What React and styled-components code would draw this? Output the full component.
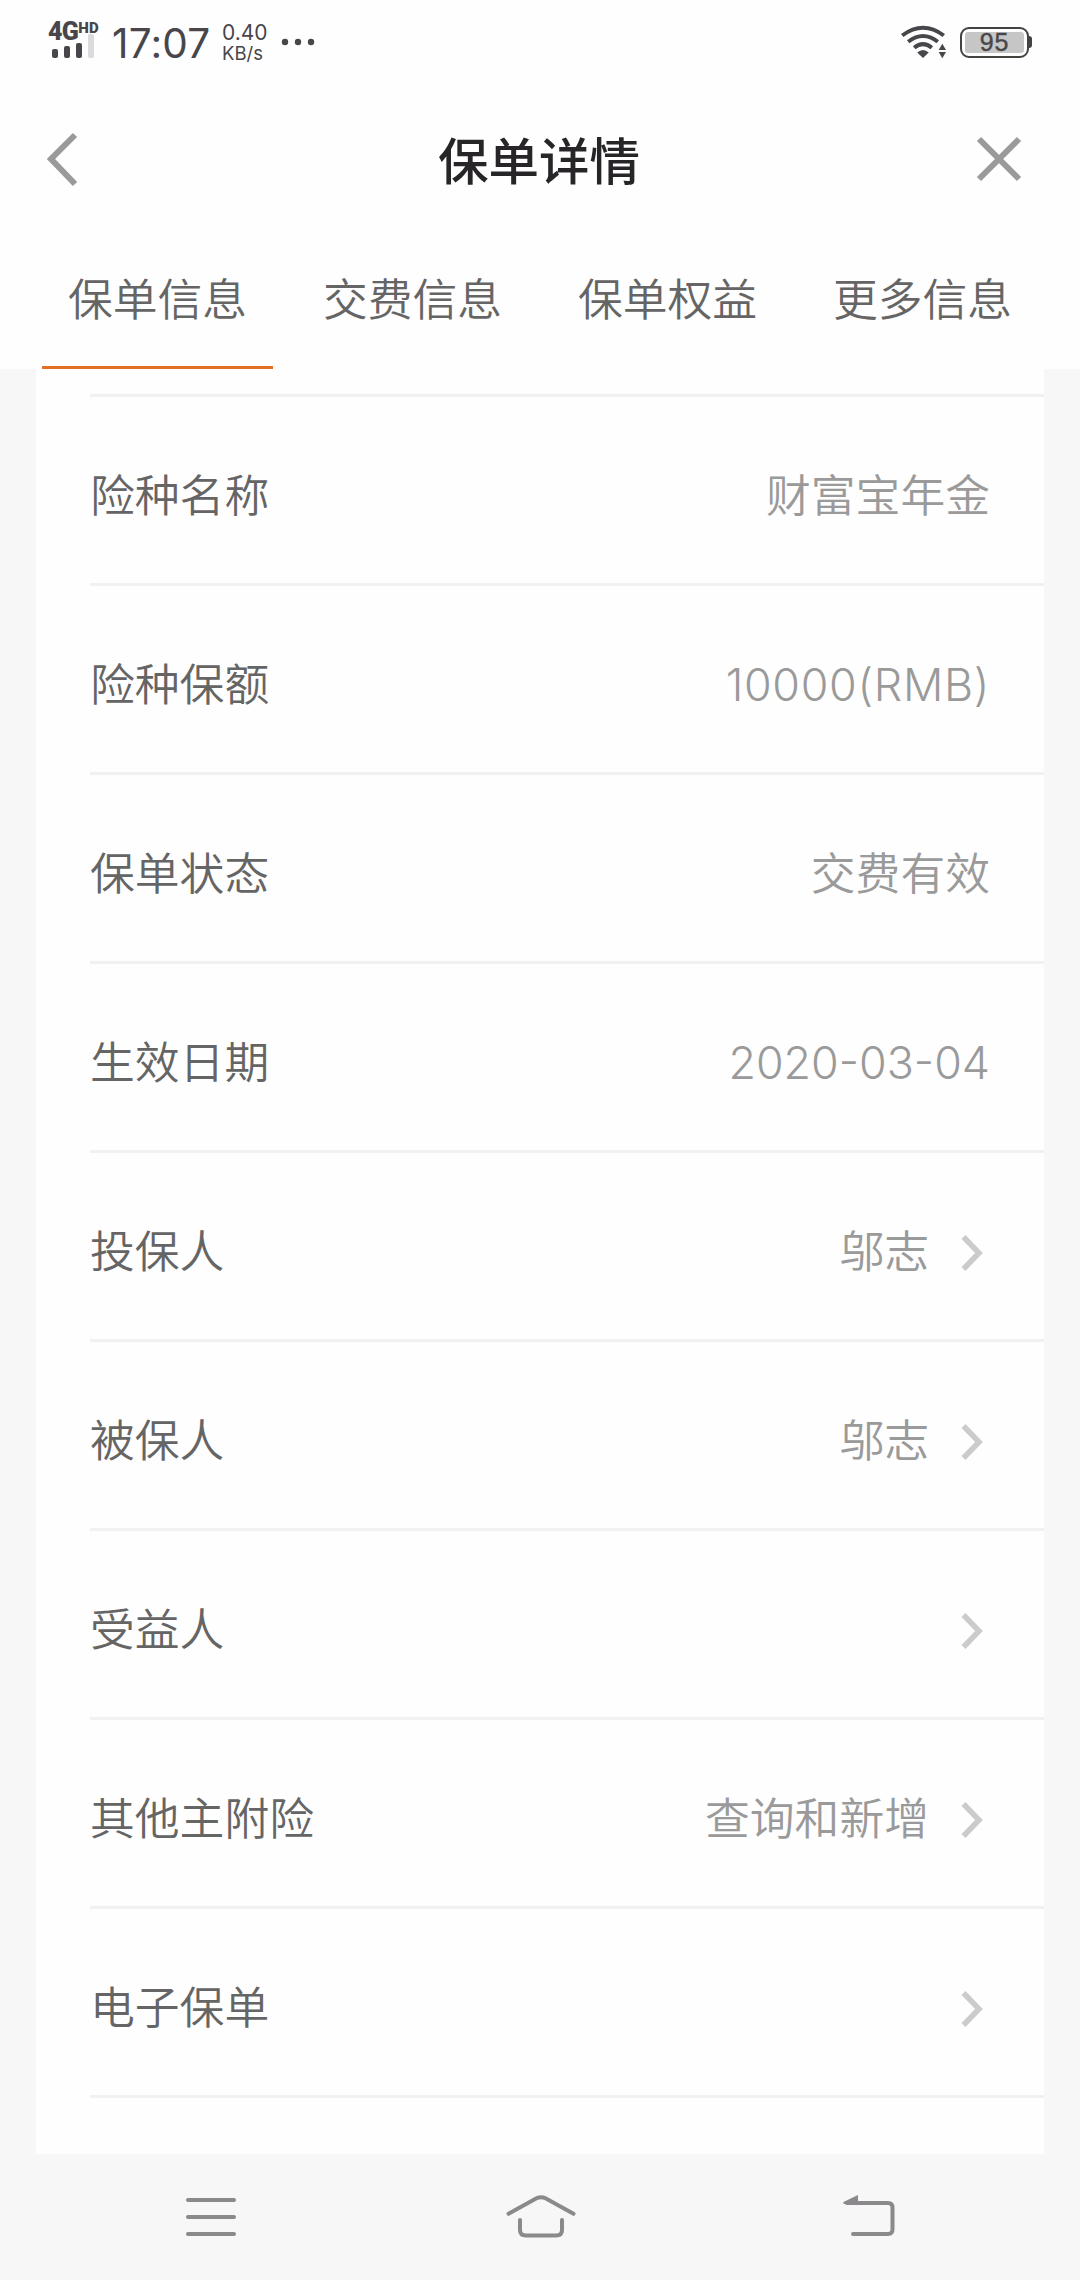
import React from 'react';
import styled, { createGlobalStyle } from 'styled-components';

const cjk = '"Noto Sans CJK SC", sans-serif';

const GlobalStyle = createGlobalStyle`
  * { box-sizing: border-box; }
  body { margin: 0; background: #f7f7f7; font-family: Inter, ${cjk}; }
`;

const Screen = styled.div`
  width: 1080px;
  height: 2280px;
  display: flex;
  flex-direction: column;
  background: #f7f7f7;
  overflow: hidden;
`;

const StatusBar = styled.div`
  height: 84px;
  padding: 0 48px;
  display: flex;
  justify-content: space-between;
  background: #fefefe;
  color: #48464a;
`;

const StatusGroup = styled.div`
  display: flex;
  align-items: flex-start;
`;

const Signal = styled.div`
  width: 52px;
  padding-top: 20px;
  display: flex;
  flex-direction: column;
`;

const Network = styled.div`
  display: flex;
  align-items: flex-start;
  font-family: Roboto, sans-serif;
  font-weight: 900;
  line-height: 24px;
  font-size: 25px;
  letter-spacing: -0.7px;
  white-space: nowrap;
`;

const NetworkMark = styled.span`
  font-size: 15px;
  line-height: 16px;
  letter-spacing: 0.2px;
`;

const SignalBars = styled.svg`
  margin: -10px 0 0 4px;
`;

const Clock = styled.div`
  width: 98px;
  margin-left: 12px;
  padding-top: 20px;
  font-size: 40.5px;
  line-height: 48px;
  letter-spacing: 0.2px;
  white-space: nowrap;
`;

const Speed = styled.div`
  width: 50px;
  margin-left: 12px;
  padding-top: 23px;
  display: flex;
  flex-direction: column;
  white-space: nowrap;
`;

const SpeedLine = styled.span`
  font-size: ${(p) => p.$size}px;
  line-height: 20px;
`;

const Dots = styled.svg`
  margin: 38px 0 0 9px;
`;

const Wifi = styled.svg`
  margin: 24px 12px 0 0;
`;

const Battery = styled.div`
  width: 69px;
  height: 31px;
  margin-top: 27px;
  padding: 3px;
  border: 2px solid #42443f;
  border-radius: 9px;
  display: flex;
`;

const BatteryLevel = styled.div`
  flex: 1;
  border-radius: 3px;
  background: #c6c6c6;
  font: 400 25px/21px "Liberation Sans", sans-serif;
  -webkit-text-stroke: 0.4px #48464a;
  letter-spacing: 0.8px;
  text-align: center;
`;

const BatteryCap = styled.div`
  width: 3px;
  height: 12px;
  margin-top: 36px;
  border-radius: 0 3px 3px 0;
  background: #42443f;
`;

const TitleBar = styled.header`
  height: 152px;
  padding: 0 56px 0 45px;
  display: flex;
  align-items: flex-start;
  justify-content: space-between;
  background: #fefefe;
`;

const Title = styled.h1`
  margin: 36px 0 0 23px;
  font: 500 50.5px/76px ${cjk};
  color: #272528;
`;

const HeaderIcon = styled.svg`
  margin-top: ${(p) => p.$top}px;
`;

const Tabs = styled.nav`
  height: 133px;
  padding: 0 42px;
  display: flex;
  justify-content: space-between;
  background: #fefefe;
`;

const Tab = styled.div`
  width: 231px;
  padding-top: 27px;
  text-align: center;
  font: 350 44.8px/68px ${cjk};
  color: #656565;
  border-bottom: 3px solid ${(p) => (p.$active ? '#e37024' : 'transparent')};
`;

const Panel = styled.main`
  height: 1785px;
  margin: 0 36px;
  padding-left: 54px;
  background: #fefefe;
`;

const ListTop = styled.div`
  height: 28px;
  border-bottom: 3px solid #eff2f0;
`;

const Row = styled.div`
  height: 189px;
  padding: 5px 54px 0 0;
  display: flex;
  align-items: center;
  border-bottom: 3px solid #eff2f0;
`;

const Label = styled.span`
  flex: 1;
  font: 350 44.8px/68px ${cjk};
  color: #656565;
`;

const Value = styled.span`
  padding-top: ${(p) => (p.$latin ? 6 : 0)}px;
  font: 350 44.8px/68px ${(p) => (p.$latin ? `Inter, ${cjk}` : cjk)};
  font-weight: ${(p) => (p.$latin ? 300 : 350)};
  font-feature-settings: "case" ${(p) => (p.$raised ? 1 : 0)};
  letter-spacing: ${(p) => p.$tracking || 0}px;
  color: #9a9a9a;
`;

const Arrow = styled.svg`
  margin: 8px 6px 0 31px;
`;

const NavBar = styled.footer`
  flex: 1;
  padding: 41px 185px 0 186px;
  display: flex;
  justify-content: space-between;
  align-items: flex-start;
`;

const HomeIcon = styled.svg`
  margin-left: 2px;
`;

const tabs = ['保单信息', '交费信息', '保单权益', '更多信息'];

const rows = [
  { label: '险种名称', value: '财富宝年金' },
  { label: '险种保额', value: '10000(RMB)', latin: true, tracking: 0.7 },
  { label: '保单状态', value: '交费有效' },
  { label: '生效日期', value: '2020-03-04', latin: true, raised: true },
  { label: '投保人', value: '邬志', link: true },
  { label: '被保人', value: '邬志', link: true },
  { label: '受益人', value: '', link: true },
  { label: '其他主附险', value: '查询和新增', link: true },
  { label: '电子保单', value: '', link: true },
];

export default function App() {
  return (
    <Screen>
      <GlobalStyle />
      <StatusBar>
        <StatusGroup>
          <Signal>
            <Network>4G<NetworkMark>HD</NetworkMark></Network>
            <SignalBars width="44" height="25" viewBox="0 0 44 25" fill="#48464a">
              <rect x="0" y="15" width="6" height="9" rx="2" />
              <rect x="12" y="12" width="6" height="12" rx="2" />
              <rect x="24" y="9" width="6" height="15" rx="2" />
              <rect x="36" y="0" width="6" height="24" rx="2" fill="#dddadd" />
            </SignalBars>
          </Signal>
          <Clock>17:07</Clock>
          <Speed>
            <SpeedLine $size={21}>0.40</SpeedLine>
            <SpeedLine $size={18.5}>KB/s</SpeedLine>
          </Speed>
          <Dots width="34" height="8" viewBox="0 0 34 8" fill="#48464a">
            <circle cx="4" cy="4" r="3.2" />
            <circle cx="17" cy="4" r="3.2" />
            <circle cx="30" cy="4" r="3.2" />
          </Dots>
        </StatusGroup>
        <StatusGroup>
          <Wifi width="48" height="36" viewBox="0 0 48 36" fill="none" stroke="#48464a" strokeWidth="4">
            <path d="M2.2 11.5 Q23 -4 43.8 11.5" />
            <path d="M8.2 17.8 Q23 6.2 37.8 17.8" />
            <path d="M14.2 23.8 Q23 16.5 31.8 23.8" />
            <path d="M17.2 28.5 Q23 23.5 28.8 28.5 L23 34Z" fill="#48464a" stroke="none" />
            <path d="M42.3 19.8 L46 26 H38.7Z M38.7 28 H46 L42.3 34.2Z" fill="#48464a" stroke="none" />
          </Wifi>
          <Battery><BatteryLevel>95</BatteryLevel></Battery>
          <BatteryCap />
        </StatusGroup>
      </StatusBar>

      <TitleBar>
        <HeaderIcon $top={47} width="36" height="58" viewBox="0 0 36 58" fill="none" stroke="#9b9a9b" strokeWidth="6">
          <path d="M30 4 L6 28 L30 53" />
        </HeaderIcon>
        <Title>保单详情</Title>
        <HeaderIcon $top={50} width="50" height="50" viewBox="0 0 50 50" fill="none" stroke="#9b9a9b" strokeWidth="6">
          <path d="M5 5 L45 45 M45 5 L5 45" />
        </HeaderIcon>
      </TitleBar>

      <Tabs>
        {tabs.map((name, i) => (
          <Tab key={name} $active={i === 0}>{name}</Tab>
        ))}
      </Tabs>

      <Panel>
        <ListTop />
        {rows.map((row) => (
          <Row key={row.label}>
            <Label>{row.label}</Label>
            <Value $tracking={row.tracking} $latin={row.latin} $raised={row.raised}>{row.value}</Value>
            {row.link && (
              <Arrow width="24" height="38" viewBox="0 0 24 38" fill="none" stroke="#cccbcc" strokeWidth="5.5">
                <path d="M3.500 3 L19 19 L3.500 35" />
              </Arrow>
            )}
          </Row>
        ))}
      </Panel>

      <NavBar>
        <svg width="50" height="44" viewBox="0 0 50 44" fill="#8b898b">
          <rect x="0" y="3" width="50" height="4" rx="2" />
          <rect x="0" y="20" width="50" height="4" rx="2" />
          <rect x="0" y="37" width="50" height="4" rx="2" />
        </svg>
        <HomeIcon width="70" height="46" viewBox="0 0 70 46" fill="none" stroke="#8b898b" strokeWidth="4" strokeLinecap="round">
          <path d="M2.500 18.800 L30.500 3.300 Q35 1 39.500 3.300 L67.500 18.800" />
          <path d="M14 25 V35 Q14 40.500 20 40.500 H50 Q56 40.500 56 35 V25" />
        </HomeIcon>
        <svg width="52" height="44" viewBox="0 0 52 44" fill="none" stroke="#8b898b" strokeWidth="4" strokeLinecap="round">
          <path d="M4 8 H45 Q49.500 8 49.500 12.500 V34.500 Q49.500 39 45 39 H10" />
          <path d="M15 0 V9 H1 Q-0.500 8 1 6.800 Z" fill="#8b898b" stroke="none" />
        </svg>
      </NavBar>
    </Screen>
  );
}
